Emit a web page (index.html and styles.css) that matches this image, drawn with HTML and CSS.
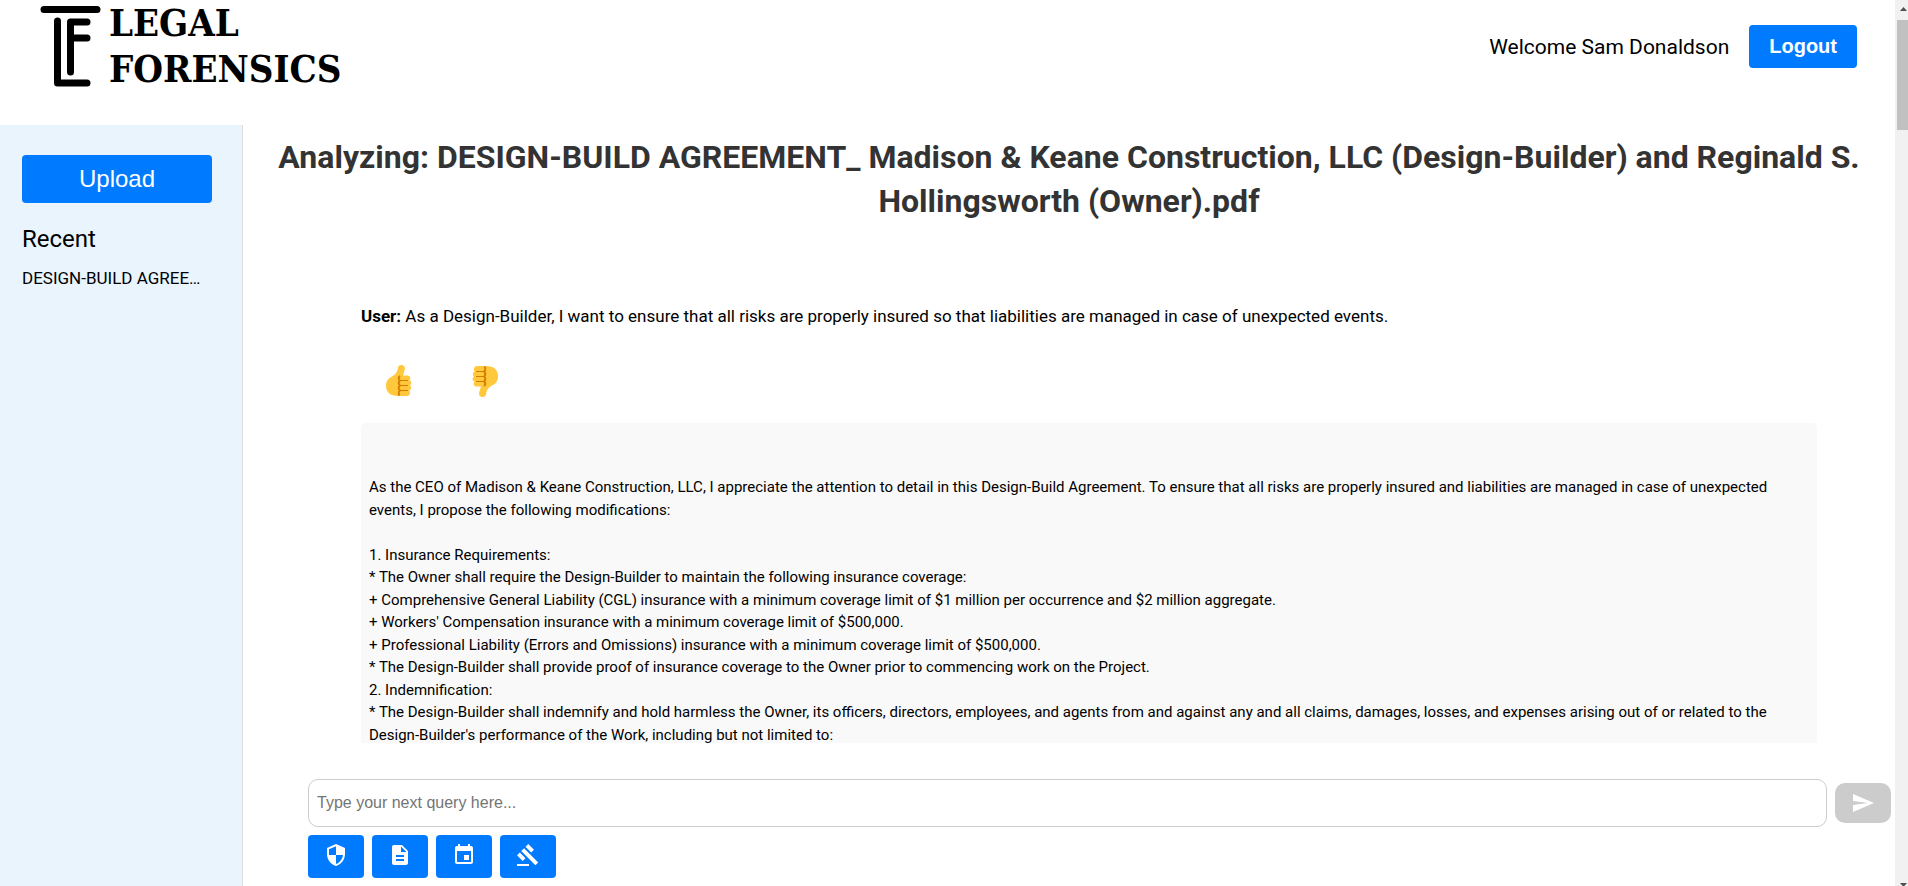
FILE: index.html
```html
<!DOCTYPE html>
<html lang="en">
<head>
<meta charset="utf-8">
<title>Legal Forensics</title>
<link rel="stylesheet" href="styles.css">
</head>
<body>
<div class="page">
  <header class="header">
    <a class="logo" href="#">
      <svg class="logo-mark" viewBox="0 0 62 84" aria-hidden="true">
        <path d="M4 5.500H57M17.500 17V79H47M47 18H30.500V68M32 34H47"/>
      </svg>
      <span class="logo-text">LEGAL<br>FORENSICS</span>
    </a>
    <div class="account">
      <span class="welcome">Welcome Sam Donaldson</span>
      <button class="logout" type="button">Logout</button>
    </div>
  </header>
  <div class="body">
    <aside class="sidebar">
      <button class="upload" type="button">Upload</button>
      <h2 class="recent">Recent</h2>
      <a class="recent-item" href="#">DESIGN-BUILD AGREEMENT_ Madison &amp; Keane Construction</a>
    </aside>
    <main class="main">
      <h1 class="title">Analyzing: DESIGN-BUILD AGREEMENT_ Madison &amp; Keane Construction, LLC (Design-Builder) and Reginald S. Hollingsworth (Owner).pdf</h1>
      <section class="chat">
        <p class="question"><strong>User:</strong> As a Design-Builder, I want to ensure that all risks are properly insured so that liabilities are managed in case of unexpected events.</p>
        <div class="votes">
          <button class="vote" type="button" aria-label="Helpful">
            <svg viewBox="0 0 26 32" aria-hidden="true"><use href="#thumb"/></svg>
          </button>
          <button class="vote" type="button" aria-label="Not helpful">
            <svg viewBox="0 0 26 32" aria-hidden="true"><use href="#thumb" transform="rotate(180 13 16)"/></svg>
          </button>
        </div>
        <div class="answer">

As the CEO of Madison &amp; Keane Construction, LLC, I appreciate the attention to detail in this Design-Build Agreement. To ensure that all risks are properly insured and liabilities are managed in case of unexpected events, I propose the following modifications:

1. Insurance Requirements:
* The Owner shall require the Design-Builder to maintain the following insurance coverage:
+ Comprehensive General Liability (CGL) insurance with a minimum coverage limit of $1 million per occurrence and $2 million aggregate.
+ Workers' Compensation insurance with a minimum coverage limit of $500,000.
+ Professional Liability (Errors and Omissions) insurance with a minimum coverage limit of $500,000.
* The Design-Builder shall provide proof of insurance coverage to the Owner prior to commencing work on the Project.
2. Indemnification:
* The Design-Builder shall indemnify and hold harmless the Owner, its officers, directors, employees, and agents from and against any and all claims, damages, losses, and expenses arising out of or related to the Design-Builder's performance of the Work, including but not limited to:</div>
      </section>
      <form class="composer">
        <div class="query-row">
          <input class="query" type="text" aria-label="Next query" placeholder="Type your next query here...">
          <button class="send" type="button" aria-label="Send">
            <svg class="icon" viewBox="0 0 24 24" aria-hidden="true"><path d="M2.010 21L23 12 2.010 3 2 10l15 2-15 2z"/></svg>
          </button>
        </div>
        <div class="tools">
          <button class="tool" type="button" aria-label="Risks">
            <svg class="icon" viewBox="0 0 24 24" aria-hidden="true"><path d="M12 1L3 5v6c0 5.550 3.840 10.740 9 12 5.160-1.260 9-6.450 9-12V5l-9-4zm0 10.990h7c-.53 4.120-3.280 7.790-7 8.940V12H5V6.300l7-3.110v8.800z"/></svg>
          </button>
          <button class="tool" type="button" aria-label="Summary">
            <svg class="icon" viewBox="0 0 24 24" aria-hidden="true"><path d="M14 2H6c-1.100 0-2 .9-2 2v16c0 1.100.89 2 1.990 2H18c1.100 0 2-.9 2-2V8l-6-6zm2 16H8v-2h8v2zm0-4H8v-2h8v2zm-3-5V3.500L18.500 9H13z"/></svg>
          </button>
          <button class="tool" type="button" aria-label="Dates">
            <svg class="icon" viewBox="0 0 24 24" aria-hidden="true"><path d="M17 12h-5v5h5v-5zM16 1v2H8V1H6v2H5c-1.110 0-2 .9-2 2v14c0 1.100.89 2 2 2h14c1.100 0 2-.9 2-2V5c0-1.100-.9-2-2-2h-1V1h-2zm3 18H5V8h14v11z"/></svg>
          </button>
          <button class="tool" type="button" aria-label="Legal">
            <svg class="icon" viewBox="0 0 24 24" aria-hidden="true"><path d="M1 21h12v2H1zM5.240 8.070l2.830-2.830 14.140 14.140-2.830 2.830zM12.320 1l5.660 5.660-2.830 2.830-5.660-5.660zM3.830 9.480l5.660 5.660-2.830 2.830L1 12.310z"/></svg>
          </button>
        </div>
      </form>
    </main>
  </div>
</div>
<div class="scrollbar" aria-hidden="true">
  <svg class="arrow" viewBox="0 0 17 20"><path d="M5 11h7L8.500 7z"/></svg>
  <div class="thumb"></div>
  <svg class="arrow arrow-down" viewBox="0 0 17 20"><path d="M5 17h7L8.500 21z"/></svg>
</div>
<svg class="defs" aria-hidden="true">
  <symbol id="thumb" viewBox="0 0 26 32">
    <path fill="#ffc83d" d="M15 0c3 0 4.500 2 3.700 5L17 10.500h4.500c3 0 3.700 3.500 1.800 4.800 2.700.8 2.700 4 .5 5.200 2 1 1.800 4.200-.5 5 1.500 1.500.8 5.500-2.300 5.500H12C4 31 0 27 0 21c0-5 2-7.500 6-9.500 4-2.300 5.500-5 6-9C12.200 1 13.500 0 15 0z"/>
    <path fill="none" stroke="#d67d00" stroke-width="2" d="M14 11c-2 1.500-1.500 3.500 0 4.500-2 1.500-1.500 4 0 5-2 1.500-1.500 4 0 5-1.500 1-1.500 3.500-.5 5"/>
    <path fill="none" stroke="#d67d00" d="M14 15.500h8M14 20.500h8M14 25.500h8"/>
  </symbol>
</svg>
</body>
</html>
```
FILE: styles.css
```css
* {
  box-sizing: border-box;
}

body {
  margin: 0;
  height: 100vh;
  display: flex;
  overflow: hidden;
  background: #fff;
  color: #000;
  font-family: Roboto, "Liberation Sans", sans-serif;
  font-size: 17px;
}

button,
input {
  font-family: "Liberation Sans", Arial, sans-serif;
}

button {
  display: flex;
  align-items: center;
  justify-content: center;
  border: 0;
  border-radius: 4px;
  padding: 0;
  background: #007bff;
  color: #fff;
  cursor: pointer;
}

.page {
  flex: 1;
  min-width: 0;
  display: flex;
  flex-direction: column;
}

.header {
  display: flex;
  justify-content: space-between;
  align-items: flex-start;
  padding: 0 38px 33px 40px;
}

.logo {
  display: flex;
  gap: 7px;
  color: #000;
  text-decoration: none;
}

.logo-mark {
  width: 62px;
  height: 88px;
  padding-top: 4px;
  fill: none;
  stroke: #000;
  stroke-width: 7;
  stroke-linecap: round;
  stroke-linejoin: round;
}

.logo-text {
  font-family: "DejaVu Serif Condensed", "DejaVu Serif", serif;
  font-size: 38px;
  font-weight: 700;
  line-height: 46px;
}

.account {
  display: flex;
  align-items: center;
  gap: 20px;
  padding-top: 25px;
}

.welcome {
  font-size: 21px;
}

.logout {
  padding: 10px 20px;
  font-size: 20px;
  font-weight: 700;
}

.body {
  flex: 1;
  min-height: 0;
  display: flex;
}

.sidebar {
  width: 243px;
  flex: none;
  padding: 30px 30px 0 22px;
  border-right: 1px solid #ddd;
  background: #e9f4fd;
}

.upload {
  width: 100%;
  height: 48px;
  font-size: 24px;
}

.recent {
  margin: 20px 0 11px;
  font-size: 24px;
  font-weight: 400;
  line-height: 32px;
}

.recent-item {
  display: block;
  padding-right: 8px;
  overflow: hidden;
  color: #000;
  line-height: 24px;
  text-decoration: none;
  text-overflow: ellipsis;
  white-space: nowrap;
}

.main {
  flex: 1;
  min-width: 0;
  display: flex;
  flex-direction: column;
}

.title {
  margin: 0;
  padding: 10px 30px 0;
  color: #333;
  font-size: 32px;
  font-weight: 700;
  line-height: 44px;
  text-align: center;
}

.chat {
  flex: 1;
  min-height: 0;
  overflow: hidden;
  margin: 81px 78px 36px 118px;
}

.question {
  margin: 0;
  line-height: 24px;
}

.votes {
  display: flex;
  gap: 60px;
  padding: 37px 25px 26px;
}

.vote {
  background: none;
}

.vote svg {
  width: 26px;
  height: 32px;
}

.answer {
  padding: 8px;
  border-radius: 5px;
  background: #f9f9f9;
  font-size: 15px;
  line-height: 1.5;
  white-space: pre-wrap;
}

.composer {
  padding: 0 4px 8px 65px;
}

.query-row {
  display: flex;
  align-items: center;
  gap: 8px;
  margin-bottom: 8px;
}

.query {
  flex: 1;
  height: 48px;
  padding: 0 8px;
  border: 1px solid #ccc;
  border-radius: 10px;
  font-size: 16px;
}

.query::placeholder {
  color: #757575;
}

.send {
  width: 56px;
  height: 40px;
  border-radius: 10px;
  background: #ccc;
}

.tools {
  display: flex;
  gap: 8px;
}

.tool {
  width: 56px;
  height: 43px;
  padding-bottom: 3px;
}

.icon {
  width: 24px;
  height: 24px;
  fill: #fff;
}

.scrollbar {
  width: 13px;
  flex: none;
  display: flex;
  flex-direction: column;
  overflow: hidden;
  background: #f1f1f1;
}

.arrow {
  width: 17px;
  height: 20px;
  flex: none;
  fill: #505050;
}

.arrow-down {
  margin-top: auto;
}

.thumb {
  height: 110px;
  margin-left: 2px;
  background: #c1c1c1;
}

.defs {
  display: none;
}
```
